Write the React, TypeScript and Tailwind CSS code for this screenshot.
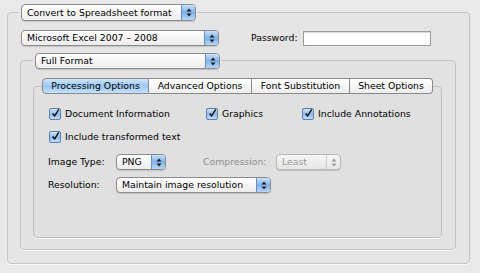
import React from 'react';

const font = "font-['DejaVu_Sans',sans-serif] text-[9.3px] leading-none";

function Arrows({ dim }: { dim?: boolean }) {
  const fill = dim ? '#9a9a9a' : '#1c1c1c';
  return (
    <svg width="6" height="9" viewBox="0 0 6 9">
      <path d="M3 0.5 L5.5 3.5 L0.5 3.5 Z" fill={fill} />
      <path d="M3 8.5 L5.5 5.5 L0.5 5.5 Z" fill={fill} />
    </svg>
  );
}

function Popup({ label, w, h = 16, disabled }: { label: string; w: number; h?: number; disabled?: boolean }) {
  return (
    <div
      className={`flex items-stretch overflow-hidden rounded-[4px] border shadow-[0_1px_1px_rgba(0,0,0,0.15)] ${
        disabled ? 'border-[#b8b8b8] bg-gradient-to-b from-[#f6f6f6] to-[#e6e6e6]' : 'border-[#8c8c8c] bg-gradient-to-b from-white to-[#ececec]'
      }`}
      style={{ width: w, height: h }}
    >
      <div className={`flex flex-1 items-center pl-[5px] ${disabled ? 'text-[#9c9c9c]' : 'text-black'}`}>{label}</div>
      <div
        className={`flex w-[14px] items-center justify-center border-l ${
          disabled
            ? 'border-[#d0d0d0] bg-transparent'
            : 'border-[#6a8fc4] bg-gradient-to-b from-[#c9e1f8] via-[#7eb1ea] to-[#b6d7f8]'
        }`}
      >
        <Arrows dim={disabled} />
      </div>
    </div>
  );
}

function Checkbox({ label }: { label: string }) {
  return (
    <div className="flex items-center gap-[4px]">
      <div className="flex h-[12px] w-[12px] items-center justify-center rounded-[2px] border border-[#5d7fae] bg-gradient-to-b from-[#d3e6fa] via-[#8ebcee] to-[#bcdcf9]">
        <svg width="11" height="11" viewBox="0 0 11 11" className="-mt-[2px] ml-[1px]">
          <path d="M2 5.5 L4.5 8.5 L9.5 0.5" stroke="#111" strokeWidth="1.8" fill="none" strokeLinejoin="round" />
        </svg>
      </div>
      <span>{label}</span>
    </div>
  );
}

function Tab({ label, w, selected, first, last }: { label: string; w: number; selected?: boolean; first?: boolean; last?: boolean }) {
  return (
    <div
      className={`flex h-[16px] items-center justify-center border-y border-r border-[#8a8a8a] ${first ? 'rounded-l-[4px] border-l' : ''} ${
        last ? 'rounded-r-[4px]' : ''
      } ${selected ? 'bg-gradient-to-b from-[#cfe4f9] via-[#9cc7f1] to-[#c6e1fb]' : 'bg-gradient-to-b from-white to-[#ededed]'}`}
      style={{ width: w }}
    >
      {label}
    </div>
  );
}

export default function App() {
  return (
    <div className={`h-[273px] w-[480px] bg-[#e9e9e9] pl-[7px] pt-[4px] text-black ${font}`}>
      <div className="w-[463px]">
        {/* Output format */}
        <div className="relative z-10 flex pl-[12px]">
          <div className="bg-[#e9e9e9] px-[2px]">
            <Popup label="Convert to Spreadsheet format" w={175} h={17} />
          </div>
        </div>
        <div className="-mt-[9px] h-[252px] rounded-[4px] border border-[#c6c6c6] bg-[#e5e5e5] pl-[13px] pt-[17px] shadow-[0_1px_0_rgba(255,255,255,0.7)]">
          <div className="flex h-[16px] items-center">
            <Popup label="Microsoft Excel 2007 – 2008" w={198} />
            <span className="ml-[32px] w-[52px]">Password:</span>
            <div className="h-[15px] w-[128px] border border-[#9d9d9d] bg-white shadow-[inset_0_1px_1px_rgba(0,0,0,0.15)]" />
          </div>

          {/* Layout */}
          <div className="mt-[7px] w-[436px] -ml-[1px]">
            <div className="relative z-10 flex pl-[13px]">
              <div className="bg-[#e5e5e5] px-[2px]">
                <Popup label="Full Format" w={185} />
              </div>
            </div>
            <div className="-mt-[9px] h-[190px] rounded-[4px] border border-[#c3c3c3] bg-[#e2e2e2] pl-[12px] pt-[17px] shadow-[0_1px_0_rgba(255,255,255,0.7)]">
              <div className="w-[409px]">
                <div className="relative z-10 flex justify-center">
                  <Tab label="Processing Options" w={107} selected first />
                  <Tab label="Advanced Options" w={103} />
                  <Tab label="Font Substitution" w={98} />
                  <Tab label="Sheet Options" w={83} last />
                </div>
                <div className="-mt-[8px] h-[152px] rounded-[4px] border border-[#c0c0c0] bg-[#e0e0e0] pl-[15px] pt-[21px] shadow-[0_1px_0_rgba(255,255,255,0.7)]">
                  <div className="grid grid-cols-[157px_96px_auto]">
                    <Checkbox label="Document Information" />
                    <Checkbox label="Graphics" />
                    <Checkbox label="Include Annotations" />
                  </div>
                  <div className="mt-[11px]">
                    <Checkbox label="Include transformed text" />
                  </div>
                  <div className="-ml-[1px] mt-[11px] flex items-center">
                    <span className="w-[68px]">Image Type:</span>
                    <Popup label="PNG" w={50} />
                    <span className="ml-[37px] w-[73px] text-[#8e8e8e]">Compression:</span>
                    <Popup label="Least" w={65} disabled />
                  </div>
                  <div className="-ml-[1px] mt-[7px] flex items-center">
                    <span className="w-[68px]">Resolution:</span>
                    <Popup label="Maintain image resolution" w={155} />
                  </div>
                </div>
              </div>
            </div>
          </div>
        </div>
      </div>
    </div>
  );
}
